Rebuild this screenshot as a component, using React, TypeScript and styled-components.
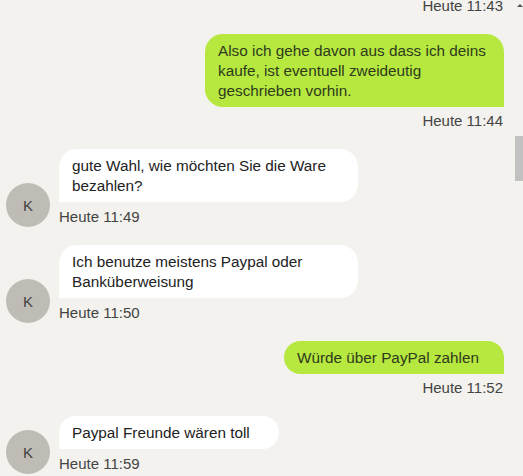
import React from "react"
import styled, { createGlobalStyle } from "styled-components"

const GlobalStyle = createGlobalStyle`
  html, body {
    margin: 0;
    padding: 0;
    background: #f3f2ee;
    overflow: hidden;
  }
  body {
    font-family: "Liberation Sans", Arial, sans-serif;
  }
`

type Msg = {
  id: number
  mine: boolean
  text: string
  time: string
}

const messages: Msg[] = [
  { id: 1, mine: true, text: "Also ich gehe davon aus dass ich deins kaufe, ist eventuell zweideutig geschrieben vorhin.", time: "Heute 11:44" },
  { id: 2, mine: false, text: "gute Wahl, wie möchten Sie die Ware bezahlen?", time: "Heute 11:49" },
  { id: 3, mine: false, text: "Ich benutze meistens Paypal oder Banküberweisung", time: "Heute 11:50" },
  { id: 4, mine: true, text: "Würde über PayPal zahlen", time: "Heute 11:52" },
  { id: 5, mine: false, text: "Paypal Freunde wären toll", time: "Heute 11:59" },
]

const Page = styled.div`
  position: relative;
  width: 523px;
  height: 476px;
  overflow: hidden;
`

const Thread = styled.div`
  display: flex;
  flex-direction: column;
  gap: 20px;
  padding: 0 19px 0 6px;
  /* the thread is scrolled a little: the previous time stamp is cut at the top */
  margin-top: -3px;
`

const Time = styled.div<{ $mine?: boolean }>`
  font-size: 15px;
  line-height: 17px;
  color: #444;
  text-align: ${(p) => (p.$mine ? "right" : "left")};
  padding-right: ${(p) => (p.$mine ? "1px" : "0")};
`

const OutGroup = styled.div`
  display: flex;
  flex-direction: column;
  align-items: flex-end;
  gap: 5px;
`

const InGroup = styled.div`
  display: flex;
  align-items: flex-end;
  gap: 9px;
`

const InBody = styled.div`
  display: flex;
  flex-direction: column;
  align-items: flex-start;
  gap: 6px;
`

const Avatar = styled.div`
  flex: none;
  width: 44px;
  height: 44px;
  margin-bottom: -2px;
  border-radius: 50%;
  background: #bfbcb6;
  color: #444;
  font-size: 15px;
  display: flex;
  align-items: center;
  justify-content: center;
`

const Bubble = styled.div<{ $mine?: boolean }>`
  box-sizing: border-box;
  max-width: 299px;
  min-width: 220px;
  padding: 7px 13px 6px 13px;
  font-size: 15.3px;
  line-height: 20px;
  color: ${(p) => (p.$mine ? "#2f3a1c" : "#222")};
  background: ${(p) => (p.$mine ? "#b6e840" : "#ffffff")};
  border-radius: ${(p) => (p.$mine ? "18px 18px 0 18px" : "18px 18px 18px 0")};
`

const ScrollTrack = styled.div`
  position: absolute;
  top: 0;
  right: 0;
  width: 8px;
  height: 100%;
`

const ScrollArrow = styled.div`
  position: absolute;
  top: 4px;
  left: 2px;
  width: 0;
  height: 0;
  border-left: 3px solid transparent;
  border-right: 3px solid transparent;
  border-bottom: 3px solid #555;
`

const ScrollThumb = styled.div`
  position: absolute;
  left: 0;
  width: 8px;
  background: #c1c1c1;
`

function Message({ msg }: { msg: Msg }) {
  if (msg.mine) {
    return (
      <OutGroup>
        <Bubble $mine>{msg.text}</Bubble>
        <Time $mine>{msg.time}</Time>
      </OutGroup>
    )
  }
  return (
    <InGroup>
      <Avatar>K</Avatar>
      <InBody>
        <Bubble>{msg.text}</Bubble>
        <Time>{msg.time}</Time>
      </InBody>
    </InGroup>
  )
}

export default function App() {
  const thumb = { top: 136, height: 45 }
  return (
    <Page>
      <GlobalStyle />
      <Thread>
        <Time $mine>Heute 11:43</Time>
        {messages.map((m) => (
          <Message key={m.id} msg={m} />
        ))}
      </Thread>
      <ScrollTrack>
        <ScrollArrow />
        <ScrollThumb style={{ top: thumb.top, height: thumb.height }} />
      </ScrollTrack>
    </Page>
  )
}
